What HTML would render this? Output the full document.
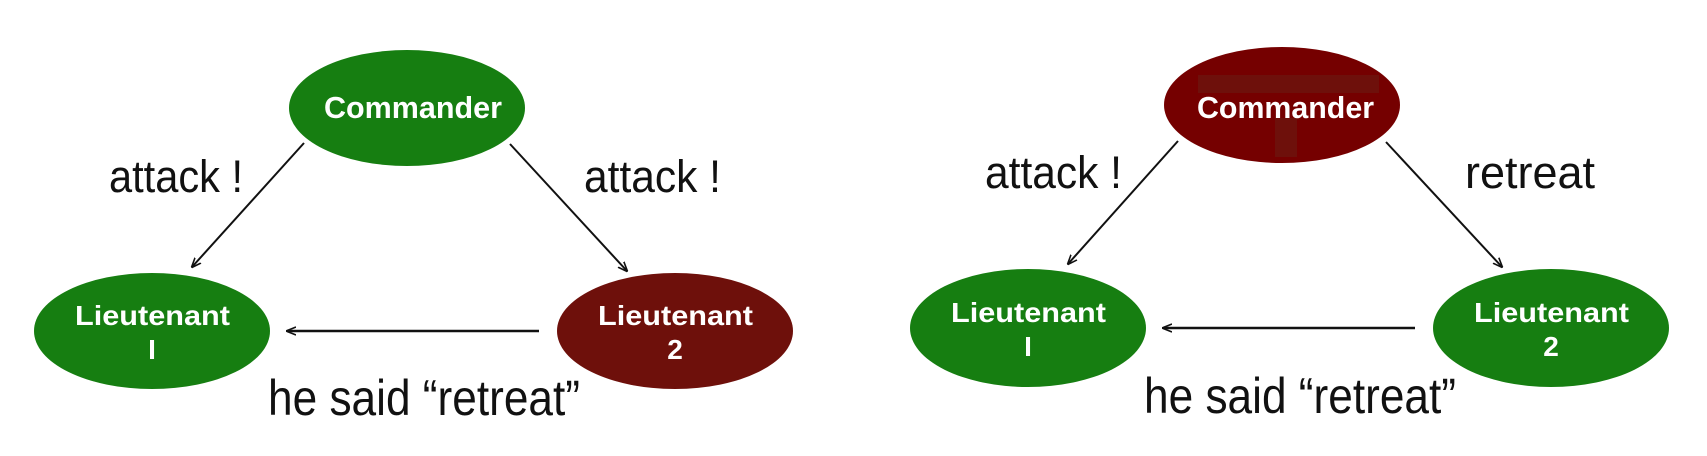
<!DOCTYPE html>
<html><head><meta charset="utf-8"><style>
html,body{margin:0;padding:0;background:#fff;width:1707px;height:456px;overflow:hidden}
svg{display:block}
.n{font-family:"Liberation Sans",sans-serif;font-weight:bold;fill:#fff}
.l{font-family:"Liberation Sans",sans-serif;fill:#111}
</style></head><body>
<svg width="1707" height="456" viewBox="0 0 1707 456">
<defs><marker id="a" markerWidth="10" markerHeight="10" refX="9" refY="5" orient="auto" markerUnits="userSpaceOnUse"><path d="M0,1 L10,5 L0,9" fill="none" stroke="#111" stroke-width="1.6"/></marker></defs>
<ellipse cx="407" cy="108" rx="118" ry="58" fill="#167e11"/>
<ellipse cx="152" cy="331" rx="118" ry="58" fill="#167e11"/>
<ellipse cx="675" cy="331" rx="118" ry="58" fill="#6e100b"/>
<text class="n" x="324" y="118" font-size="31" textLength="178" lengthAdjust="spacingAndGlyphs">Commander</text>
<text class="n" x="75" y="325" font-size="28" textLength="155" lengthAdjust="spacingAndGlyphs">Lieutenant</text>
<text class="n" x="152" y="359" font-size="28" text-anchor="middle">I</text>
<text class="n" x="598" y="325" font-size="28" textLength="155" lengthAdjust="spacingAndGlyphs">Lieutenant</text>
<text class="n" x="675" y="359" font-size="28" text-anchor="middle">2</text>
<line x1="304" y1="143" x2="192" y2="267" stroke="#111" stroke-width="2" marker-end="url(#a)"/>
<line x1="510" y1="144" x2="627" y2="271" stroke="#111" stroke-width="2" marker-end="url(#a)"/>
<line x1="539" y1="331" x2="287" y2="331" stroke="#111" stroke-width="2.5" marker-end="url(#a)"/>
<text class="l" x="109" y="192" font-size="45" textLength="134" lengthAdjust="spacingAndGlyphs">attack !</text>
<text class="l" x="584" y="192" font-size="45" textLength="137" lengthAdjust="spacingAndGlyphs">attack !</text>
<text class="l" x="268" y="415" font-size="50" textLength="312" lengthAdjust="spacingAndGlyphs">he said “retreat”</text>
<ellipse cx="1282" cy="105" rx="118" ry="58" fill="#750000"/>
<rect x="1198" y="75" width="181" height="18" fill="#6e100b"/>
<rect x="1275" y="118" width="22" height="39" fill="#6e100b"/>
<ellipse cx="1028" cy="328" rx="118" ry="59" fill="#167e11"/>
<ellipse cx="1551" cy="328" rx="118" ry="59" fill="#167e11"/>
<text class="n" x="1197" y="118" font-size="31" textLength="177" lengthAdjust="spacingAndGlyphs">Commander</text>
<text class="n" x="951" y="322" font-size="28" textLength="155" lengthAdjust="spacingAndGlyphs">Lieutenant</text>
<text class="n" x="1028" y="356" font-size="28" text-anchor="middle">I</text>
<text class="n" x="1474" y="322" font-size="28" textLength="155" lengthAdjust="spacingAndGlyphs">Lieutenant</text>
<text class="n" x="1551" y="356" font-size="28" text-anchor="middle">2</text>
<line x1="1178" y1="141" x2="1068" y2="264" stroke="#111" stroke-width="2" marker-end="url(#a)"/>
<line x1="1386" y1="142" x2="1502" y2="267" stroke="#111" stroke-width="2" marker-end="url(#a)"/>
<line x1="1415" y1="328" x2="1163" y2="328" stroke="#111" stroke-width="2.5" marker-end="url(#a)"/>
<text class="l" x="985" y="188" font-size="45" textLength="137" lengthAdjust="spacingAndGlyphs">attack !</text>
<text class="l" x="1465" y="188" font-size="45" textLength="130" lengthAdjust="spacingAndGlyphs">retreat</text>
<text class="l" x="1144" y="413" font-size="50" textLength="312" lengthAdjust="spacingAndGlyphs">he said “retreat”</text>
</svg>
</body></html>
